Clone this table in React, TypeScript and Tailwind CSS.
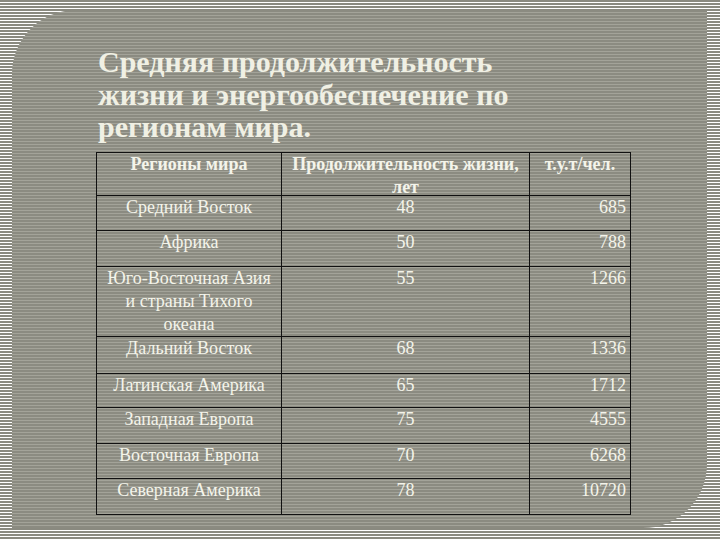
const rows: { region: string; life: string; energy: string }[] = [
  { region: "Средний Восток", life: "48", energy: "685" },
  { region: "Африка", life: "50", energy: "788" },
  { region: "Юго-Восточная Азия и страны Тихого океана", life: "55", energy: "1266" },
  { region: "Дальний Восток", life: "68", energy: "1336" },
  { region: "Латинская Америка", life: "65", energy: "1712" },
  { region: "Западная Европа", life: "75", energy: "4555" },
  { region: "Восточная Европа", life: "70", energy: "6268" },
  { region: "Северная Америка", life: "78", energy: "10720" },
];

const cell = "border-r border-b border-[#111] px-1 overflow-visible";

export default function App() {
  return (
    <div className="w-[720px] h-[540px] pl-[12px] pr-[13px] pt-[10px] pb-[12px] bg-[repeating-linear-gradient(to_bottom,#8a8a80_0px,#8a8a80_1.8px,#ffffff_1.8px,#ffffff_3px)]">
      <div
        className="h-full rounded-tl-[64px] rounded-br-[64px] pl-[86px] pt-[36px] text-[#f4f4ea] bg-[repeating-linear-gradient(to_bottom,#8b8b81_0px,#8b8b81_2px,#a3a399_2px,#a3a399_3px)]"
        style={{ fontFamily: '"Liberation Serif", "DejaVu Serif", serif' }}
      >
        <h1 className="text-[30px] font-bold leading-[32.5px] w-[470px] text-[#f0f0e4]">
          Средняя продолжительность жизни и энергообеспечение по регионам мира.
        </h1>

        <div className="mt-[8px] -ml-[2px] w-fit grid grid-cols-[185px_248px_101px] grid-rows-[43px_35px_36px_70px_37px_34px_36px_35px_36px] border-l border-t border-[#111] text-[18px] leading-[23px]">
          <div className={`${cell} text-center font-bold`}>Регионы мира</div>
          <div className={`${cell} text-center font-bold`}>Продолжительность жизни, лет</div>
          <div className={`${cell} text-center font-bold`}>т.у.т/чел.</div>
          {rows.map((r) => (
            <>
              <div key={r.region} className={`${cell} text-center`}>
                {r.region}
              </div>
              <div key={r.region + "l"} className={`${cell} text-center`}>
                {r.life}
              </div>
              <div key={r.region + "e"} className={`${cell} text-right`}>
                {r.energy}
              </div>
            </>
          ))}
        </div>
      </div>
    </div>
  );
}
